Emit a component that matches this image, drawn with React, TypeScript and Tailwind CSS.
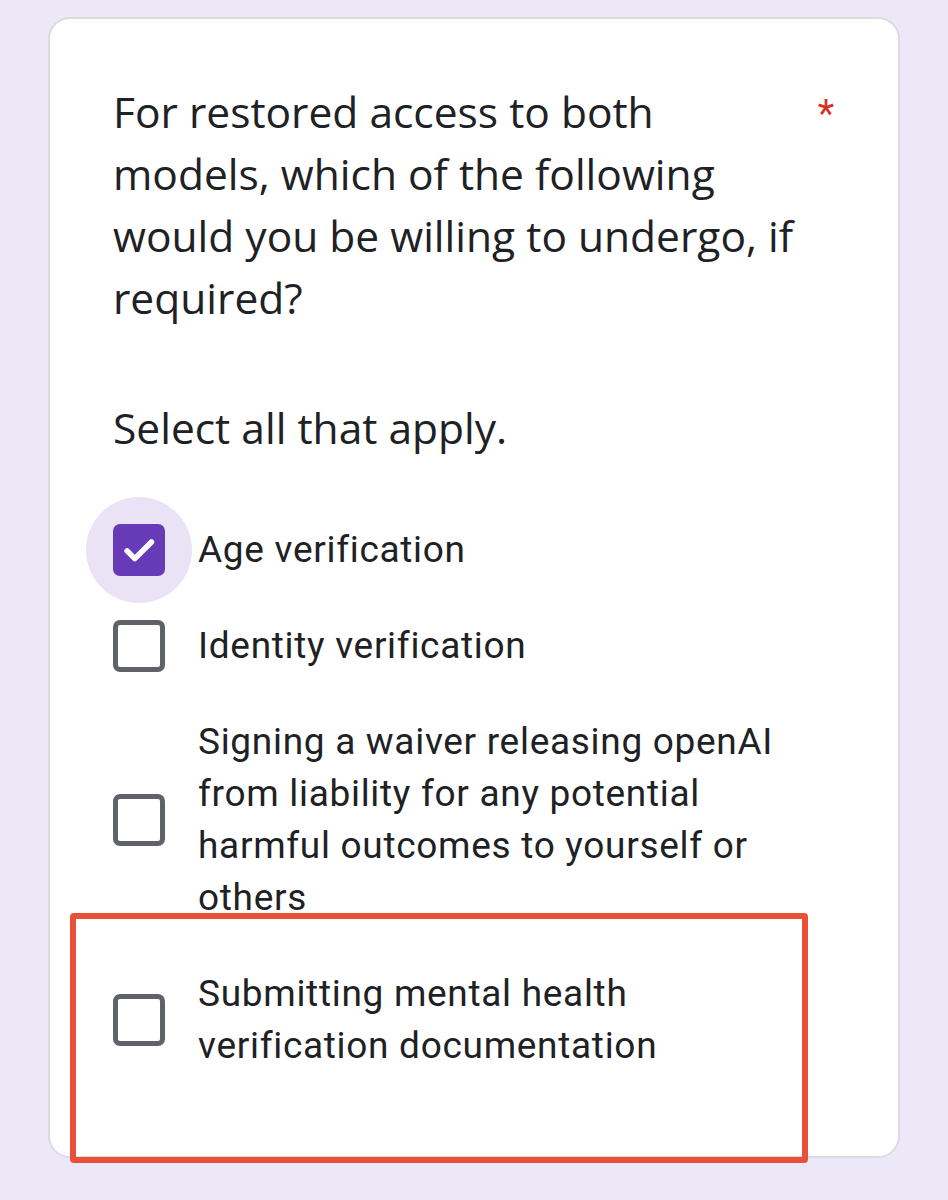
import React from "react"

type Option = { label: string; checked?: boolean; multi?: boolean }

const OPTIONS: Option[] = [
  { label: "Age verification", checked: true },
  { label: "Identity verification" },
  {
    label:
      "Signing a waiver releasing openAI from liability for any potential harmful outcomes to yourself or others",
    multi: true,
  },
  { label: "Submitting mental health verification documentation", multi: true },
]

const Checkbox: React.FC<{ checked?: boolean }> = ({ checked }) => (
  <div className="relative flex h-[52px] w-[52px] shrink-0 items-center justify-center">
    {checked && (
      <div className="absolute left-1/2 top-1/2 h-[106px] w-[106px] -translate-x-1/2 -translate-y-1/2 rounded-full bg-[#e9e3f5]" />
    )}
    {checked ? (
      <div className="relative flex h-[52px] w-[52px] items-center justify-center rounded-[7px] bg-[#673ab7]">
        <svg viewBox="0 0 24 24" className="h-[44px] w-[44px]" fill="none">
          <path
            d="M5.5 12.5l4.2 4.2L18.8 7.6"
            stroke="white"
            strokeWidth="3"
            strokeLinecap="round"
            strokeLinejoin="round"
          />
        </svg>
      </div>
    ) : (
      <div className="relative h-[52px] w-[52px] rounded-[7px] border-[5px] border-[#5f6368] bg-white" />
    )}
  </div>
)

export default function App() {
  return (
    <div className="relative h-[1200px] overflow-hidden bg-[#ece8f7] pt-[17px]">
      <div className="ml-[48px] w-[852px] rounded-[22px] border-2 border-[#dadce0] bg-white pb-[62px] pl-[63px] pr-[40px] pt-[62px]">
        <div className="flex items-start justify-between">
          <p className="w-[690px] font-['Open_Sans',sans-serif] text-[42.5px] leading-[62px] text-[#202124]">
            For restored access to both models, which of the following would you be willing to undergo, if required?
          </p>
          <span className="mr-[24px] mt-[2px] font-['Roboto',sans-serif] text-[38px] leading-[62px] text-[#d93025]">*</span>
        </div>
        <p className="mt-[68px] font-['Open_Sans',sans-serif] text-[42.5px] leading-[62px] text-[#202124]">
          Select all that apply.
        </p>
        <div className="mt-[43px] flex flex-col">
          {OPTIONS.map((o) => (
            <div
              key={o.label}
              className={
                o.multi
                  ? "flex items-center gap-[33px] py-[22px]"
                  : "flex h-[96px] items-center gap-[33px]"
              }
            >
              <Checkbox checked={o.checked} />
              <span className="w-[600px] font-['Roboto',sans-serif] text-[37px] leading-[52px] tracking-[0.7px] text-[#202124]">
                {o.label}
              </span>
            </div>
          ))}
        </div>
      </div>

      {/* annotation box */}
      <div className="pointer-events-none absolute left-[70px] top-[913px] h-[250px] w-[738px] rounded-[4px] border-[6px] border-[#e8503a]" />
    </div>
  )
}
